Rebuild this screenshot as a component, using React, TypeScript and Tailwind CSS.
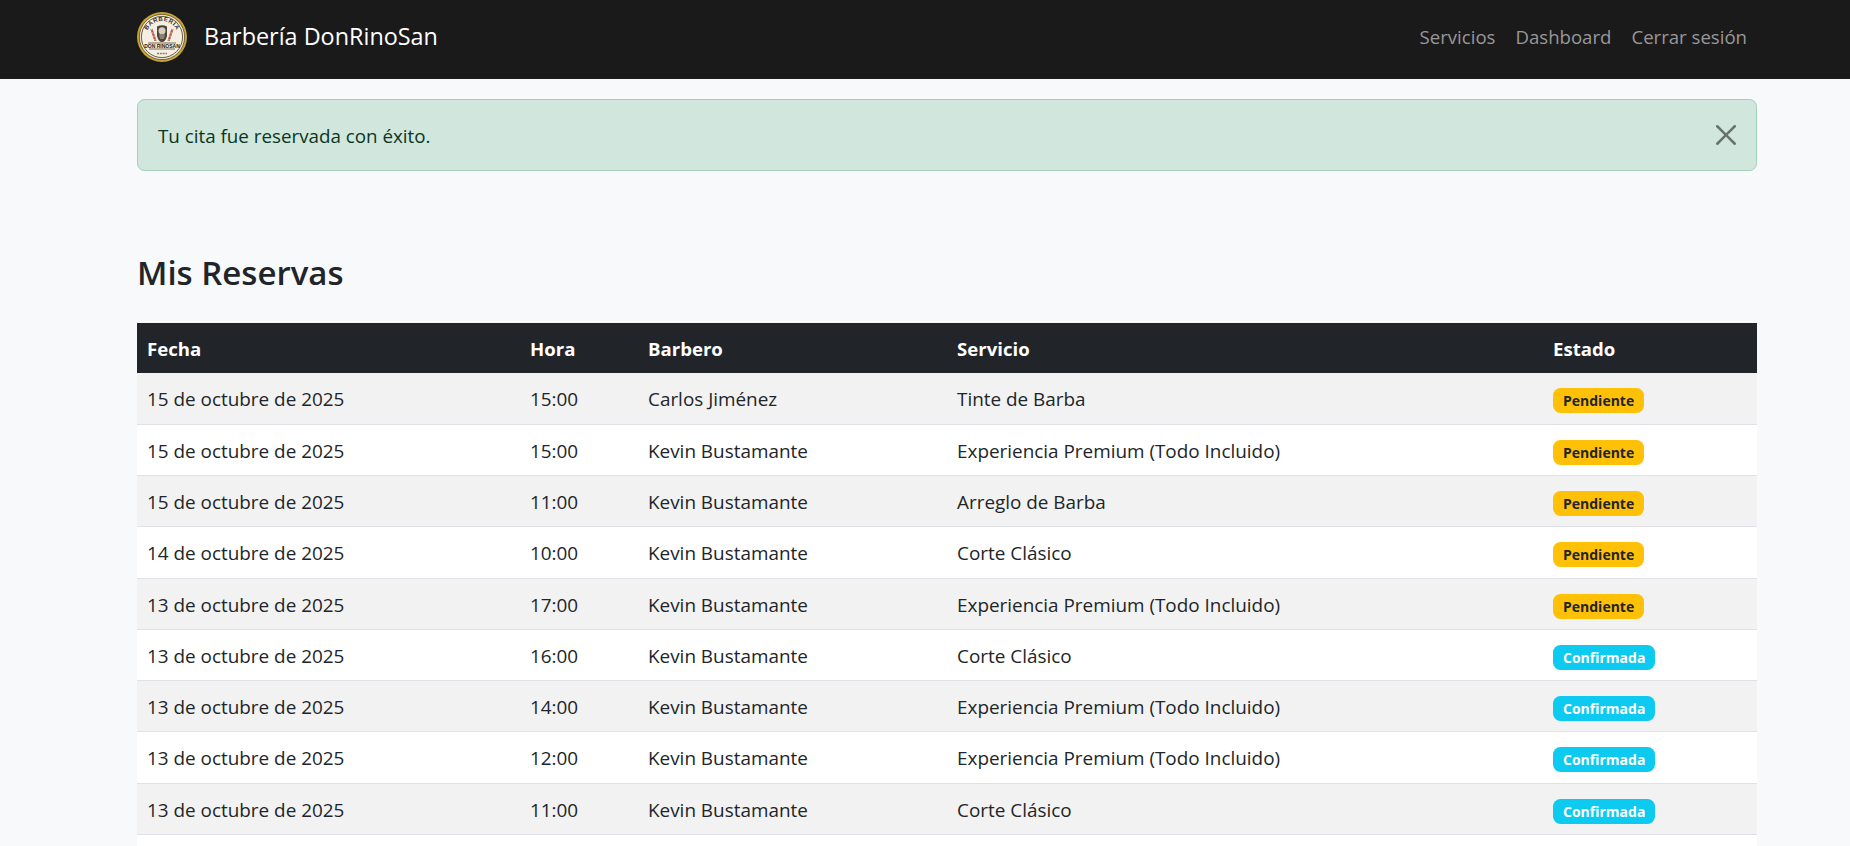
const rows: [string, string, string, string, "p" | "c"][] = [
  ["15 de octubre de 2025", "15:00", "Carlos Jiménez", "Tinte de Barba", "p"],
  ["15 de octubre de 2025", "15:00", "Kevin Bustamante", "Experiencia Premium (Todo Incluido)", "p"],
  ["15 de octubre de 2025", "11:00", "Kevin Bustamante", "Arreglo de Barba", "p"],
  ["14 de octubre de 2025", "10:00", "Kevin Bustamante", "Corte Clásico", "p"],
  ["13 de octubre de 2025", "17:00", "Kevin Bustamante", "Experiencia Premium (Todo Incluido)", "p"],
  ["13 de octubre de 2025", "16:00", "Kevin Bustamante", "Corte Clásico", "c"],
  ["13 de octubre de 2025", "14:00", "Kevin Bustamante", "Experiencia Premium (Todo Incluido)", "c"],
  ["13 de octubre de 2025", "12:00", "Kevin Bustamante", "Experiencia Premium (Todo Incluido)", "c"],
  ["13 de octubre de 2025", "11:00", "Kevin Bustamante", "Corte Clásico", "c"],
];

function Logo() {
  return (
    <svg width="50" height="50" viewBox="0 0 50 50" className="shrink-0">
      <defs>
        <path id="logo-arc" d="M9.5 21 A16 16 0 0 1 40.5 21" />
      </defs>
      <circle cx="25" cy="25" r="25" fill="#c9a32f" />
      <circle cx="25" cy="25" r="22.6" fill="#f4efe2" stroke="#2b2418" strokeWidth="0.6" />
      <circle cx="25" cy="25" r="20.6" fill="none" stroke="#5a4a30" strokeWidth="0.9" />
      <text fontFamily="'Liberation Sans',sans-serif" fontWeight="700" fontSize="6" fill="#3a2e1f" letterSpacing="0.6">
        <textPath href="#logo-arc" startOffset="50%" textAnchor="middle">BARBERÍA</textPath>
      </text>
      <path d="M14.5 17 L18.5 29" stroke="#b0574a" strokeWidth="2.2" />
      <path d="M35.5 17 L31.5 29" stroke="#b0574a" strokeWidth="2.2" />
      <path d="M14.5 17 L18.5 29 M35.5 17 L31.5 29" stroke="#e9e4d8" strokeWidth="0.8" strokeDasharray="1.5 2" />
      <path d="M20 14.5 Q25 12 30 14.5 V24 Q28.5 30 25 30 Q21.5 30 20 24z" fill="#4d4538" />
      <ellipse cx="25" cy="18.8" rx="3.5" ry="3.6" fill="#d6cfbd" />
      <path d="M22 22.5 Q25 21 28 22.5 L27 27 H23z" fill="#8b8474" />
      <path d="M11 31 H39 M12 37 H38" stroke="#5a4a30" strokeWidth="0.8" />
      <text x="25" y="36" textAnchor="middle" fontFamily="'Liberation Sans',sans-serif" fontWeight="700" fontSize="5" fill="#211a10">DON RINOSAN</text>
      <path d="M20 41.5 H30" stroke="#8d7c5c" strokeWidth="1.3" strokeDasharray="2 0.8" />
    </svg>
  );
}

function Badge({ kind }: { kind: "p" | "c" }) {
  return kind === "p" ? (
    <span className="inline-block rounded-[7.5px] bg-[#ffc107] px-[10px] py-[5px] text-[14px] leading-[15px] font-bold text-[#212529]">
      Pendiente
    </span>
  ) : (
    <span className="inline-block rounded-[7.5px] bg-[#0dcaf0] px-[10px] py-[5px] text-[14px] leading-[15px] font-bold text-white">
      Confirmada
    </span>
  );
}

export default function App() {
  return (
    <div className="h-[846px] overflow-hidden bg-[#f8f9fa] font-['Open_Sans','Noto_Sans',sans-serif] text-[18.6px] leading-[30px] text-[#212529]">
      <nav className="h-[79px] bg-[#1a1a1a]">
        <div className="ml-[137px] flex h-full w-[1620px] items-center justify-between">
          <div className="flex items-center gap-[17px] pb-[5px]">
            <Logo />
            <span className="pb-[3px] text-[23.4px] leading-[38px] text-white">Barbería DonRinoSan</span>
          </div>
          <div className="flex pb-[5px] text-[#989898]">
            <span className="p-[10px]">Servicios</span>
            <span className="p-[10px]">Dashboard</span>
            <span className="p-[10px]">Cerrar sesión</span>
          </div>
        </div>
      </nav>
      <main className="ml-[137px] w-[1620px] pt-[20px]">
        <div className="flex h-[72px] items-center justify-between rounded-[7.5px] border border-[#a3cfbb] bg-[#d1e7dd] px-[20px] text-[18.8px] text-[#0a3622]">
          <span className="pt-[2px]">Tu cita fue reservada con éxito.</span>
          <svg width="20" height="20" viewBox="0 0 16 16" fill="#000" opacity="0.5">
            <path d="M.293.293a1 1 0 0 1 1.414 0L8 6.586 14.293.293a1 1 0 1 1 1.414 1.414L9.414 8l6.293 6.293a1 1 0 0 1-1.414 1.414L8 9.414l-6.293 6.293a1 1 0 0 1-1.414-1.414L6.586 8 .293 1.707a1 1 0 0 1 0-1.414z" />
          </svg>
        </div>
        <h2 className="mt-[78px] mb-[26px] text-[33px] leading-[48px] font-semibold">Mis Reservas</h2>
        <table className="w-full table-fixed border-collapse">
          <colgroup>
            <col className="w-[383px]" />
            <col className="w-[118px]" />
            <col className="w-[309px]" />
            <col className="w-[596px]" />
            <col className="w-[214px]" />
          </colgroup>
          <thead>
            <tr className="h-[50px] bg-[#212529] text-left text-white">
              <th className="px-[10px] pt-[1px] font-bold">Fecha</th>
              <th className="px-[10px] pt-[1px] font-bold">Hora</th>
              <th className="px-[10px] pt-[1px] font-bold">Barbero</th>
              <th className="px-[10px] pt-[1px] font-bold">Servicio</th>
              <th className="px-[10px] pt-[1px] font-bold">Estado</th>
            </tr>
          </thead>
          <tbody className="text-[18.9px]">
            {rows.map((r, i) => (
              <tr key={i} className={`h-[51.25px] border-b border-[#dee2e6] ${i % 2 === 0 ? "bg-[#f2f2f2]" : "bg-white"}`}>
                <td className="px-[10px] pt-[2px]">{r[0]}</td>
                <td className="px-[10px] pt-[2px]">{r[1]}</td>
                <td className="px-[10px] pt-[2px]">{r[2]}</td>
                <td className="px-[10px] pt-[2px]">{r[3]}</td>
                <td className="px-[10px] pt-[2px]"><Badge kind={r[4]} /></td>
              </tr>
            ))}
            <tr className="h-[51px] bg-white"><td colSpan={5} /></tr>
          </tbody>
        </table>
      </main>
    </div>
  );
}
